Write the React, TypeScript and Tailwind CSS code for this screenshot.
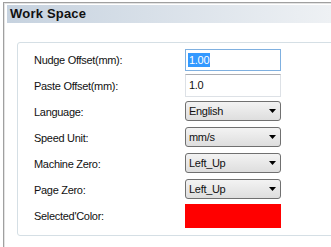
export default function App() {
  const font = { fontFamily: '"Liberation Sans", Arial, sans-serif' };

  const combos = [
    { label: "Language:", value: "English" },
    { label: "Speed Unit:", value: "mm/s" },
    { label: "Machine Zero:", value: "Left_Up" },
    { label: "Page Zero:", value: "Left_Up" },
  ];

  return (
    <div className="w-[331px] h-[247px] bg-white overflow-hidden" style={font}>
      {/* outer frame */}
      <div className="ml-[3px] mt-[2px] h-[245px] border-l border-t border-[#a0a0a0] shadow-[inset_1px_1px_0_#e3e3e3] pt-[2px] pl-[3px]">
        {/* title bar */}
        <div className="h-[18px] bg-gradient-to-r from-[#c6d2df] to-[#eef1f4] flex items-center pl-[3px]">
          <span className="text-[13px] font-bold text-[#111] tracking-[0.2px]">Work Space</span>
        </div>

        {/* group box */}
        <div className="ml-[10px] mt-[19px] w-[330px] h-[194px] border border-[#d5dfe5] rounded-[3px] pl-[16px] pt-[6px] text-[11px] tracking-[-0.3px] text-[#111]">
          <div className="flex items-center h-[22px]">
            <span className="w-[151px] pt-[1px]">Nudge Offset(mm):</span>
            <div className="w-[96px] h-[22px] border border-[#7fb0e0] bg-white flex items-center pl-[2px]">
              <span className="bg-[#3399ff] text-white leading-[14px] px-[1px]">1.00</span>
            </div>
          </div>

          <div className="flex items-center h-[23px] mt-[3px]">
            <span className="w-[151px] pt-[1px]">Paste Offset(mm):</span>
            <div className="w-[96px] h-[23px] border border-[#dde1e6] border-t-[#abadb3] bg-white flex items-center pl-[3px]">
              <span>1.0</span>
            </div>
          </div>

          {combos.map((c, i) => (
            <div key={i} className={`flex items-center h-[20px] ${i === 0 ? "mt-[4px]" : "mt-[6px]"}`}>
              <span className="w-[151px] pt-[2px]">{c.label}</span>
              <div className="w-[96px] h-[20px] border border-[#707070] rounded-[3px] bg-gradient-to-b from-[#f3f3f3] to-[#dedede] flex items-center justify-between pl-[3px] pr-[4px]">
                <span>{c.value}</span>
                <svg width="7" height="4" viewBox="0 0 7 4">
                  <polygon points="0,0 7,0 3.5,4" fill="#000" />
                </svg>
              </div>
            </div>
          ))}

          <div className="flex items-center h-[24px] mt-[5px]">
            <span className="w-[151px] pt-[1px]">Selected'Color:</span>
            <div className="w-[96px] h-[24px] bg-[#ff0000]" />
          </div>
        </div>
      </div>
    </div>
  );
}
